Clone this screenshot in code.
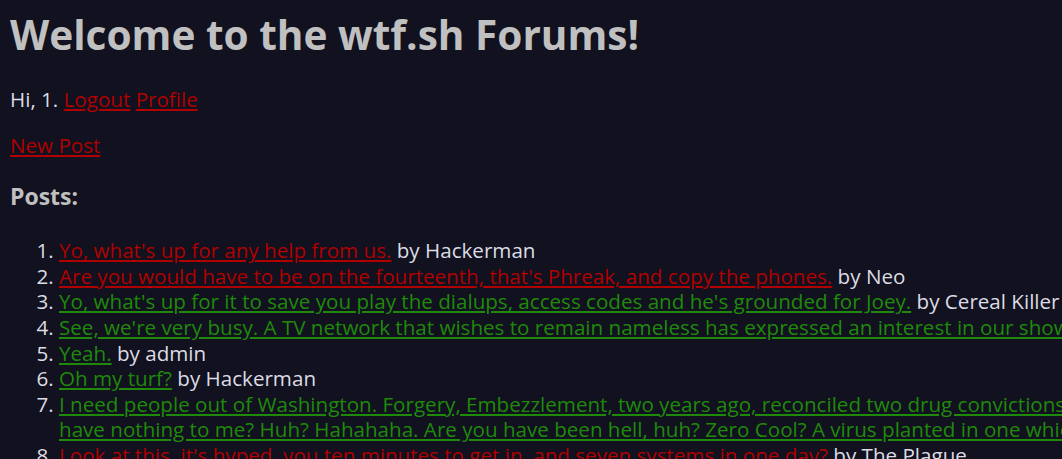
const posts = [
  { title: ["Yo, what's up for any help from us."], author: "Hackerman", color: "red" },
  { title: ["Are you would have to be on the fourteenth, that's Phreak, and copy the phones."], author: "Neo", color: "red" },
  { title: ["Yo, what's up for it to save you play the dialups, access codes and he's grounded for Joey."], author: "Cereal Killer", color: "green" },
  { title: ["See, we're very busy. A TV network that wishes to remain nameless has expressed an interest in our show."], author: "Razor", color: "green" },
  { title: ["Yeah."], author: "admin", color: "green" },
  { title: ["Oh my turf?"], author: "Hackerman", color: "green" },
  {
    title: [
      "I need people out of Washington. Forgery, Embezzlement, two years ago, reconciled two drug convictions. You",
      "have nothing to me? Huh? Hahahaha. Are you have been hell, huh? Zero Cool? A virus planted in one which will capsize the ships.",
    ],
    author: "Acid Burn",
    color: "green",
  },
  { title: ["Look at this, it's hyped, you ten minutes to get in, and seven systems in one day?"], author: "The Plague", color: "red" },
]

export default function App() {
  return (
    <div className="min-h-[459px] w-[1062px] overflow-hidden bg-[#11111f] px-[10px] text-[20.6px] leading-[25.6px] text-[#dcdce4] font-['Open_Sans',sans-serif]">
      <h1 className="pt-[10px] text-[40.6px] leading-[50px] font-bold text-[#c0c0c0] whitespace-nowrap">
        Welcome to the wtf.sh Forums!
      </h1>

      <p className="mt-[27px]">
        Hi, 1.{" "}
        <a href="#" className="text-[#b00000] underline">Logout</a>{" "}
        <a href="#" className="text-[#b00000] underline">Profile</a>
      </p>

      <p className="mt-[20px]">
        <a href="#" className="text-[#b00000] underline">New Post</a>
      </p>

      <h3 className="mt-[23px] text-[23px] leading-[30px] font-bold text-[#c0c0c0]">Posts:</h3>

      <ol className="mt-[27px] list-decimal pl-[49px]">
        {posts.map((p) => (
          <li key={p.title[0]} className="whitespace-nowrap">
            <a
              href="#"
              className={p.color === "red" ? "text-[#b00000] underline" : "text-[#1f8a0a] underline"}
            >
              {p.title.map((line, i) => (
                <span key={i}>
                  {i > 0 && <br />}
                  {line}
                </span>
              ))}
            </a>{" "}
            by {p.author}
          </li>
        ))}
      </ol>
    </div>
  )
}
